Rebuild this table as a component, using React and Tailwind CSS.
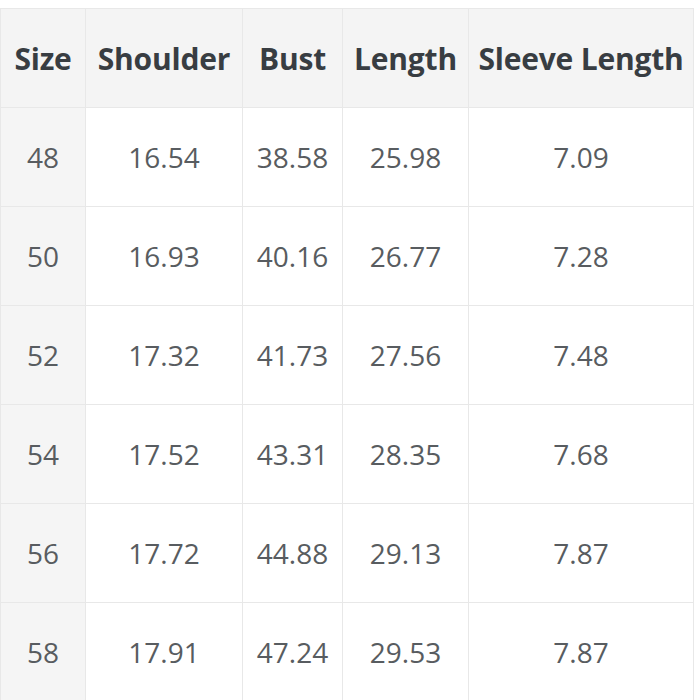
import React from "react";

const headers = ["Size", "Shoulder", "Bust", "Length", "Sleeve Length"];
const rows = [
  ["48", "16.54", "38.58", "25.98", "7.09"],
  ["50", "16.93", "40.16", "26.77", "7.28"],
  ["52", "17.32", "41.73", "27.56", "7.48"],
  ["54", "17.52", "43.31", "28.35", "7.68"],
  ["56", "17.72", "44.88", "29.13", "7.87"],
  ["58", "17.91", "47.24", "29.53", "7.87"],
];
const widths = ["w-[85px]", "w-[157px]", "w-[100px]", "w-[126px]", "w-[225px]"];

export default function App() {
  return (
    <div className="w-[700px] h-[700px] overflow-hidden bg-white pt-[8px]" style={{ fontFamily: '"Open Sans", sans-serif' }}>
      <table className="border-collapse table-fixed w-[693px]">
        <colgroup>
          {widths.map((w, i) => (
            <col key={i} className={w} />
          ))}
        </colgroup>
        <thead>
          <tr className="h-[99px]">
            {headers.map((h, i) => (
              <th
                key={i}
                className="border border-[#e8e8e8] bg-[#f4f4f4] text-[30px] font-bold text-[#383d42] text-center align-middle p-0 whitespace-nowrap tracking-[-0.2px]"
              >
                {h}
              </th>
            ))}
          </tr>
        </thead>
        <tbody>
          {rows.map((r, ri) => (
            <tr key={ri} className="h-[99px]">
              {r.map((c, ci) => (
                <td
                  key={ci}
                  className={
                    "border border-[#e8e8e8] text-[28px] text-[#585c60] text-center align-middle p-0 " +
                    (ci === 0 ? "bg-[#f5f5f5]" : "bg-white")
                  }
                >
                  {c}
                </td>
              ))}
            </tr>
          ))}
        </tbody>
      </table>
    </div>
  );
}
